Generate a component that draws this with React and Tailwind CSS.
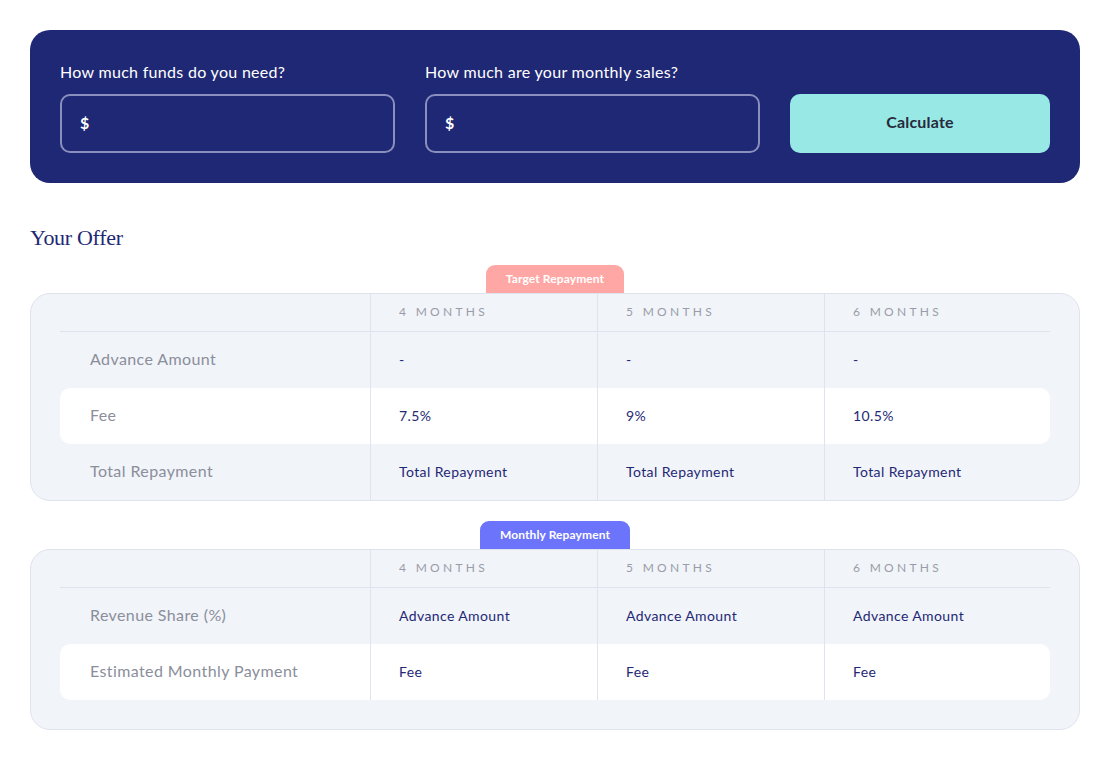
import React from "react";

const cols = ["4 MONTHS", "5 MONTHS", "6 MONTHS"];
const grid = "grid grid-cols-[310px_227px_227px_226px]";

function Cell({ children, first, value }) {
  if (first) {
    return (
      <div className="flex items-center px-[30px] pb-[2px] text-[16px] tracking-[0.4px] text-[#8b8e9b]">{children}</div>
    );
  }
  return (
    <div className={"flex items-center border-l border-[#dfe3ee] pl-[28px] pb-[2px] " + (value ? "text-[14px] tracking-[0.4px] text-[#1f2874]" : "")}>
      {children}
    </div>
  );
}

function Table({ badge, badgeClass, rows, padBottom }) {
  return (
    <div className="flex flex-col items-center">
      <div className={"flex h-[28px] items-center rounded-t-[9px] px-[20px] pb-[1px] text-[12px] font-bold tracking-[0.1px] text-white " + badgeClass}>
        {badge}
      </div>
      <div className={"w-full rounded-[20px] border border-[#dfe3ee] bg-[#f1f4f9] px-[29px] " + (padBottom ? "pb-[29px]" : "")}>
        <div className={grid + " h-[38px] border-b border-[#dfe3ee]"}>
          <div />
          {cols.map((c) => (
            <div key={c} className="flex items-center border-l border-[#dfe3ee] pl-[28px] pb-[2px] text-[12px] tracking-[3.3px] text-[#9a9ca8]">
              {c}
            </div>
          ))}
        </div>
        {rows.map((r, i) => (
          <div key={i} className={grid + " h-[56px] " + (r.white ? "rounded-[10px] bg-white" : "")}>
            <Cell first>{r.label}</Cell>
            {r.values.map((v, j) => (
              <Cell key={j} value>
                {v}
              </Cell>
            ))}
          </div>
        ))}
      </div>
    </div>
  );
}

function Field({ label }) {
  return (
    <div className="flex w-[335px] flex-col">
      <div className="mb-[11px] text-[16px] leading-[22px] tracking-[0.3px] text-white">{label}</div>
      <div className="flex h-[59px] items-center rounded-[10px] border-2 border-[#8a8fbd] pl-[18px] pb-[2px] text-[16px] font-bold text-white">
        $
      </div>
    </div>
  );
}

export default function App() {
  return (
    <div className="min-h-screen bg-white p-[30px]" style={{ fontFamily: "Lato, 'Open Sans', sans-serif" }}>
      <div className="flex items-end gap-[30px] rounded-[20px] bg-[#1f2874] px-[30px] pb-[30px] pt-[31px]">
        <Field label="How much funds do you need?" />
        <Field label="How much are your monthly sales?" />
        <button className="flex h-[59px] w-[260px] items-center justify-center rounded-[10px] bg-[#98e8e6] pb-[3px] text-[16px] font-bold tracking-[0.2px] text-[#272a3a]">
          Calculate
        </button>
      </div>

      <div
        className="mt-[41px] text-[22px] leading-[28px] tracking-[-0.3px] text-[#1f2874]"
        style={{ fontFamily: "'Liberation Serif', serif" }}
      >
        Your Offer
      </div>

      <div className="mt-[13px]">
        <Table
          badge="Target Repayment"
          badgeClass="bg-[#ffa7a4]"
          rows={[
            { label: "Advance Amount", values: ["-", "-", "-"] },
            { label: "Fee", values: ["7.5%", "9%", "10.5%"], white: true },
            { label: "Total Repayment", values: ["Total Repayment", "Total Repayment", "Total Repayment"] },
          ]}
        />
      </div>

      <div className="mt-[20px]">
        <Table
          badge="Monthly Repayment"
          badgeClass="bg-[#6b74fb]"
          padBottom
          rows={[
            { label: "Revenue Share (%)", values: ["Advance Amount", "Advance Amount", "Advance Amount"] },
            { label: "Estimated Monthly Payment", values: ["Fee", "Fee", "Fee"], white: true },
          ]}
        />
      </div>
    </div>
  );
}
